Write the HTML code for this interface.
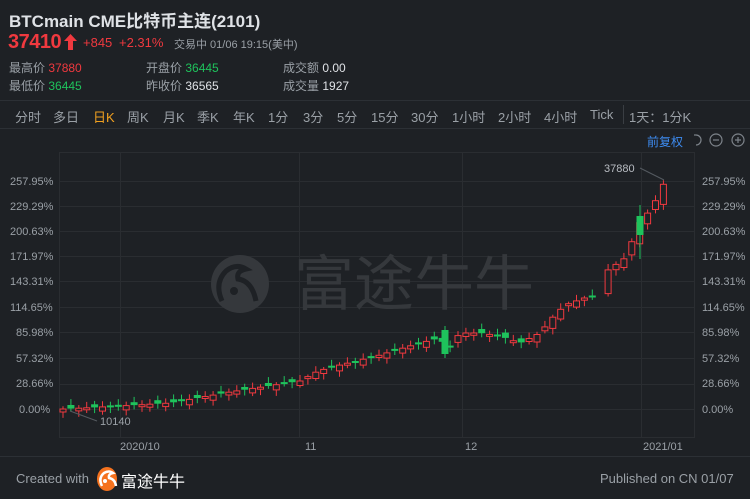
<!DOCTYPE html>
<html><head><meta charset="utf-8"><style>
body{margin:0;width:750px;height:499px;background:#1e2125;font-family:"Liberation Sans","Noto Sans CJK SC",sans-serif;color:#c9ccd1;overflow:hidden;position:relative}
.a{position:absolute;white-space:nowrap}
.g{color:#9aa0a6}.r{color:#f0393f}.gr{color:#1ec35c}
.tb span{position:absolute;top:107px;font-size:13px;color:#9aa0a6}
.yl{position:absolute;font-size:11px;color:#9aa0a6}
</style></head><body>
<div class="a" style="left:9px;top:7px;font-size:17px;font-weight:bold;color:#dfe2e6">BTCmain CME比特币主连(2101)</div>
<div class="a r" style="left:8px;top:31px;font-size:20px;font-weight:bold;letter-spacing:-0.5px">37410</div>
<svg class="a" style="left:64px;top:34px" width="13" height="16"><path d="M6.5 0L13 7H9v9H4V7H0z" fill="#f0393f"/></svg>
<div class="a r" style="left:83px;top:35px;font-size:13px">+845</div>
<div class="a r" style="left:119px;top:35px;font-size:13px">+2.31%</div>
<div class="a g" style="left:174px;top:36px;font-size:11px">交易中 01/06 19:15(美中)</div>
<div class="a" style="left:9px;top:59px;font-size:12px"><span class="g">最高价</span> <span class="r">37880</span></div>
<div class="a" style="left:9px;top:77px;font-size:12px"><span class="g">最低价</span> <span class="gr">36445</span></div>
<div class="a" style="left:146px;top:59px;font-size:12px"><span class="g">开盘价</span> <span class="gr">36445</span></div>
<div class="a" style="left:146px;top:77px;font-size:12px"><span class="g">昨收价</span> <span style="color:#dfe2e6">36565</span></div>
<div class="a" style="left:283px;top:59px;font-size:12px"><span class="g">成交额</span> <span style="color:#dfe2e6">0.00</span></div>
<div class="a" style="left:283px;top:77px;font-size:12px"><span class="g">成交量</span> <span style="color:#dfe2e6">1927</span></div>
<div class="a" style="left:0;top:100px;width:750px;height:1px;background:#2c3035"></div>
<div class="a" style="left:0;top:128px;width:750px;height:1px;background:#2c3035"></div>
<div class="tb">
<span style="left:15px">分时</span><span style="left:53px">多日</span><span style="left:93px;color:#f0a020">日K</span><span style="left:127px">周K</span><span style="left:163px">月K</span><span style="left:197px">季K</span><span style="left:233px">年K</span><span style="left:268px">1分</span><span style="left:303px">3分</span><span style="left:337px">5分</span><span style="left:371px">15分</span><span style="left:411px">30分</span><span style="left:452px">1小时</span><span style="left:498px">2小时</span><span style="left:544px">4小时</span><span style="left:590px">Tick</span><span style="left:629px">1天：1分K</span>
</div>
<div class="a" style="left:623px;top:105px;width:1px;height:19px;background:#3a3e43"></div>
<div class="a" style="left:647px;top:133px;font-size:12px;color:#3d8bf0">前复权</div>
<svg class="a" style="left:690px;top:132px" width="56" height="16" viewBox="0 0 56 16" fill="none" stroke="#7d838a" stroke-width="1.2">
<path d="M6 3a5 5 0 1 1 0 10" /><path d="M6 3h-2"/>
<circle cx="26" cy="8" r="6"/><path d="M23 8h6"/>
<circle cx="48" cy="8" r="6"/><path d="M45 8h6M48 5v6"/>
</svg>
<svg class="a" style="left:0;top:0" width="750" height="499">
<g stroke="#2a2d31" stroke-width="1">
<rect x="59.5" y="152.5" width="635" height="285" fill="none"/>
<line x1="120.5" y1="152" x2="120.5" y2="437"/><line x1="299.5" y1="152" x2="299.5" y2="437"/><line x1="462.5" y1="152" x2="462.5" y2="437"/><line x1="641.5" y1="152" x2="641.5" y2="437"/>
<line x1="59" y1="181.5" x2="694" y2="181.5"/><line x1="59" y1="206.5" x2="694" y2="206.5"/><line x1="59" y1="231.5" x2="694" y2="231.5"/><line x1="59" y1="256.5" x2="694" y2="256.5"/><line x1="59" y1="281.5" x2="694" y2="281.5"/><line x1="59" y1="307.5" x2="694" y2="307.5"/><line x1="59" y1="332.5" x2="694" y2="332.5"/><line x1="59" y1="358.5" x2="694" y2="358.5"/><line x1="59" y1="384.5" x2="694" y2="384.5"/><line x1="59" y1="409.5" x2="694" y2="409.5"/>
</g>
<line x1="0" y1="456.5" x2="750" y2="456.5" stroke="#2c3035"/>
<circle cx="240" cy="284" r="29" fill="#35383c"/>
<path d="M222 301 q-8-18 4-30 q10-8 20-2 q-10 2-8 10 q14 2 18 22" fill="none" stroke="#1e2125" stroke-width="5"/>
<circle cx="234" cy="291" r="4" fill="#1e2125"/>
<text x="294" y="305" font-size="60" fill="#35383c" font-family="Noto Sans CJK SC,sans-serif">富途牛牛</text>
<g id="c"></g>
<line x1="640" y1="168" x2="664" y2="180" stroke="#555a60"/>
<text x="604" y="172" font-size="11" fill="#b8bcc2">37880</text>
<line x1="70" y1="411" x2="97" y2="421" stroke="#555a60"/>
<text x="100" y="425" font-size="11" fill="#9aa0a6">10140</text>
<g font-size="11" fill="#9aa0a6">
<text x="120" y="450">2020/10</text><text x="305" y="450">11</text><text x="465" y="450">12</text><text x="643" y="450">2021/01</text>
</g>
</svg>
<div class="yl" style="left:10px;top:176px">257.95%</div><div class="yl" style="left:10px;top:201px">229.29%</div><div class="yl" style="left:10px;top:226px">200.63%</div><div class="yl" style="left:10px;top:251px">171.97%</div><div class="yl" style="left:10px;top:276px">143.31%</div><div class="yl" style="left:10px;top:302px">114.65%</div><div class="yl" style="left:16px;top:327px">85.98%</div><div class="yl" style="left:16px;top:353px">57.32%</div><div class="yl" style="left:16px;top:378px">28.66%</div><div class="yl" style="left:19px;top:404px">0.00%</div>
<div class="yl" style="left:702px;top:176px">257.95%</div><div class="yl" style="left:702px;top:201px">229.29%</div><div class="yl" style="left:702px;top:226px">200.63%</div><div class="yl" style="left:702px;top:251px">171.97%</div><div class="yl" style="left:702px;top:276px">143.31%</div><div class="yl" style="left:702px;top:302px">114.65%</div><div class="yl" style="left:702px;top:327px">85.98%</div><div class="yl" style="left:702px;top:353px">57.32%</div><div class="yl" style="left:702px;top:378px">28.66%</div><div class="yl" style="left:702px;top:404px">0.00%</div>
<div class="a" style="left:16px;top:471px;font-size:13px;color:#9aa0a6">Created with</div>
<svg class="a" style="left:96px;top:466px" width="22" height="26"><ellipse cx="11" cy="13" rx="10" ry="12" fill="#f5721e"/><path d="M6 20q-4-8 2-13q5-3 9 0q-5 1-4 5q6 1 7 8" fill="none" stroke="#fff" stroke-width="2.5"/><circle cx="9" cy="15" r="2" fill="#fff"/></svg>
<div class="a" style="left:121px;top:468px;font-size:16px;color:#fff">富途牛牛</div>
<div class="a" style="left:600px;top:471px;font-size:13px;color:#9aa0a6">Published on CN 01/07</div>
<script>
(function(){
var k=[[63,409],[120,406],[170,403],[230,392],[300,381],[318,371],[340,365],[380,355],[420,343],[440,338],[447,350],[460,333],[480,333],[500,336],[520,343],[540,333],[552,318],[565,305],[590,296],[600,298],[608,270],[625,258],[640,222],[652,208],[664,183]];
function yAt(x){for(var i=1;i<k.length;i++)if(x<=k[i][0]){var a=k[i-1],b=k[i];return a[1]+(b[1]-a[1])*(x-a[0])/(b[0]-a[0]);}return 183;}
var h='',prev=409,n=0;
for(var x=63;x<=666;x+=7.9){n++;var c=yAt(x),o=prev+Math.sin(n*2.3)*4;if(x>598&&x<606)continue;
if(Math.abs(o-c)<1.5&&n%3==0){o=c-3;}
var up=c<o,tp=Math.min(o,c),bh=Math.max(Math.abs(o-c),2),col=up?'#f0393f':'#1ec35c';
h+='<line x1="'+x.toFixed(1)+'" y1="'+(tp-2-Math.abs(Math.sin(x))*4).toFixed(1)+'" x2="'+x.toFixed(1)+'" y2="'+(tp+bh+2+Math.abs(Math.cos(x))*4).toFixed(1)+'" stroke="'+col+'"/>';
h+=up?'<rect x="'+(x-3).toFixed(1)+'" y="'+tp.toFixed(1)+'" width="6" height="'+bh.toFixed(1)+'" fill="#1e2125" stroke="'+col+'"/>':'<rect x="'+(x-3.5).toFixed(1)+'" y="'+tp.toFixed(1)+'" width="7" height="'+bh.toFixed(1)+'" fill="'+col+'"/>';
prev=c;}
h+='<line x1="445" y1="326" x2="445" y2="358" stroke="#1ec35c"/><rect x="441.5" y="330" width="7" height="24" fill="#1ec35c"/>';
h+='<line x1="640" y1="205" x2="640" y2="259" stroke="#1ec35c"/><rect x="636.5" y="216" width="7" height="19" fill="#1ec35c"/>';
document.getElementById('c').innerHTML=h;
})();
</script>
</body></html>
